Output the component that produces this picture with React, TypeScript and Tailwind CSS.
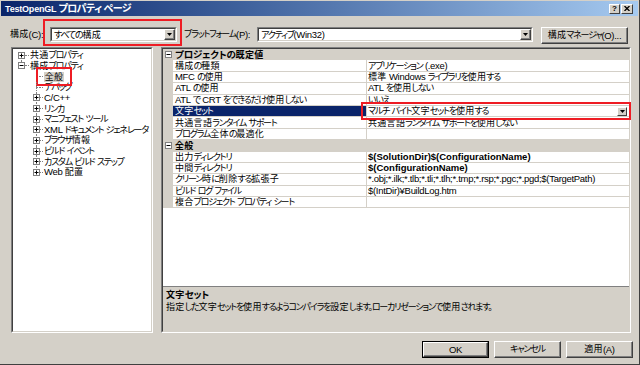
import React from "react";

function Txt({ t, bold }: { t: string; bold?: boolean }) {
  const parts =
    t.match(/[\u0000-\u024f]+|[\u4e00-\u9fff\u3005]+|[^\u0000-\u024f\u4e00-\u9fff\u3005]+/g) || [];
  return (
    <>
      {parts.map((s, i) => {
        const c = s.charCodeAt(0);
        if (c < 0x250)
          return (
            <span key={i} className={bold ? "text-[9.5px] tracking-[0px]" : "text-[9.5px] tracking-[-0.3px]"}>
              {s}
            </span>
          );
        if ((c >= 0x4e00 && c <= 0x9fff) || c === 0x3005)
          return (
            <span key={i} className="text-[9px] tracking-[0.3px]">
              {s}
            </span>
          );
        return (
          <span key={i} className={bold ? "text-[9.5px] tracking-[-0.2px]" : "text-[9px] tracking-[-1.2px]"}>
            {s}
          </span>
        );
      })}
    </>
  );
}

function Expander({ minus }: { minus?: boolean }) {
  return (
    <svg width="7" height="7" viewBox="0 0 7 7" className="block relative shrink-0">
      <rect x="0.5" y="0.5" width="6" height="6" fill="white" stroke="#808080" />
      <path d="M1.5 3.5H5.5" stroke="black" />
      {!minus && <path d="M3.5 1.5V5.5" stroke="black" />}
    </svg>
  );
}

function Arrow() {
  return (
    <svg width="5" height="3" viewBox="0 0 5 3" className="block">
      <path d="M0 0H5L2.5 3Z" fill="black" />
    </svg>
  );
}

function DropBtn() {
  return (
    <div className="w-[11px] h-full shrink-0 bg-[#d4d0c8] border border-t-white border-l-white border-b-[#404040] border-r-[#404040] shadow-[inset_-1px_-1px_0_#808080] flex items-center justify-center">
      <Arrow />
    </div>
  );
}

function Combo({ text, w, red }: { text: string; w: string; red?: boolean }) {
  return (
    <div className={`relative h-[15px] shrink-0 ${w}`}>
      <div className="w-full h-full border border-t-[#808080] border-l-[#808080] border-b-white border-r-white">
        <div className="w-full h-full border border-t-[#404040] border-l-[#404040] border-b-[#d4d0c8] border-r-[#d4d0c8] bg-white flex items-center">
          <span className="flex-1 pl-[2px] leading-none whitespace-nowrap overflow-hidden">
            <Txt t={text} />
          </span>
          <DropBtn />
        </div>
      </div>
      {red && (
        <div className="absolute -left-[7px] -right-[5px] -top-[8px] -bottom-[4px] border-2 border-[#ee1c24]" />
      )}
    </div>
  );
}

function Button({ label, def }: { label: string; def?: boolean }) {
  return (
    <div className={`w-[67px] h-[17px] ${def ? "border border-black" : ""}`}>
      <div className="w-full h-full bg-[#d4d0c8] border border-t-white border-l-white border-b-[#404040] border-r-[#404040] shadow-[inset_-1px_-1px_0_#808080] flex items-center justify-center leading-none whitespace-nowrap">
        <Txt t={label} />
      </div>
    </div>
  );
}

type TreeItem = {
  label: string;
  level: 1 | 2;
  exp?: "plus" | "minus";
  sel?: boolean;
  last?: boolean;
  vline?: "down" | "up";
};

const tree: TreeItem[] = [
  { label: "共通プロパティ", level: 1, exp: "plus", vline: "down" },
  { label: "構成プロパティ", level: 1, exp: "minus", vline: "up" },
  { label: "全般", level: 2, sel: true },
  { label: "デバッグ", level: 2 },
  { label: "C/C++", level: 2, exp: "plus" },
  { label: "リンカ", level: 2, exp: "plus" },
  { label: "マニフェスト ツール", level: 2, exp: "plus" },
  { label: "XML ドキュメント ジェネレータ", level: 2, exp: "plus" },
  { label: "ブラウザ情報", level: 2, exp: "plus" },
  { label: "ビルド イベント", level: 2, exp: "plus" },
  { label: "カスタム ビルド ステップ", level: 2, exp: "plus" },
  { label: "Web 配置", level: 2, exp: "plus", last: true },
];

type Prop = { h?: string; n?: string; v?: string; b?: boolean; sel?: boolean };

const props: Prop[] = [
  { h: "プロジェクトの既定値" },
  { n: "構成の種類", v: "アプリケーション (.exe)" },
  { n: "MFC の使用", v: "標準 Windows ライブラリを使用する" },
  { n: "ATL の使用", v: "ATL を使用しない" },
  { n: "ATL で CRT をできるだけ使用しない", v: "いいえ" },
  { n: "文字セット", v: "マルチ バイト文字セットを使用する", sel: true },
  { n: "共通言語ランタイム サポート", v: "共通言語ランタイム サポートを使用しない" },
  { n: "プログラム全体の最適化", v: "" },
  { h: "全般" },
  { n: "出力ディレクトリ", v: "$(SolutionDir)$(ConfigurationName)", b: true },
  { n: "中間ディレクトリ", v: "$(ConfigurationName)", b: true },
  {
    n: "クリーン時に削除する拡張子",
    v: "*.obj;*.ilk;*.tlb;*.tli;*.tlh;*.tmp;*.rsp;*.pgc;*.pgd;$(TargetPath)",
  },
  { n: "ビルド ログ ファイル", v: "$(IntDir)¥BuildLog.htm" },
  { n: "複合プロジェクト プロパティ シート", v: "" },
];

function TreeRow({ it }: { it: TreeItem }) {
  if (it.level === 1) {
    return (
      <div className="flex items-center h-[10.65px]">
        <div className="w-[5px] shrink-0" />
        <div className="relative w-[7px] h-full shrink-0 flex items-center">
          {it.vline === "down" && (
            <div className="absolute left-[3px] top-1/2 bottom-0 border-l border-dotted border-[#808080]" />
          )}
          {it.vline === "up" && (
            <div className="absolute left-[3px] top-0 h-1/2 border-l border-dotted border-[#808080]" />
          )}
          <Expander minus={it.exp === "minus"} />
        </div>
        <div className="w-[4px] shrink-0 border-t border-dotted border-[#808080]" />
        <span className="ml-[1px] leading-none whitespace-nowrap">
          <Txt t={it.label} />
        </span>
      </div>
    );
  }
  return (
    <div className="flex items-center h-[10.65px]">
      <div className="w-[20px] shrink-0" />
      <div className="relative w-[7px] h-full shrink-0 flex items-center">
        {it.last ? (
          <div className="absolute left-[3px] top-0 h-1/2 border-l border-dotted border-[#808080]" />
        ) : (
          <div className="absolute left-[3px] top-0 bottom-0 border-l border-dotted border-[#808080]" />
        )}
        {it.exp ? (
          <Expander />
        ) : (
          <div className="ml-[3px] w-[4px] border-t border-dotted border-[#808080]" />
        )}
      </div>
      <div className="w-[3px] shrink-0 border-t border-dotted border-[#808080]" />
      {it.sel ? (
        <span className="relative inline-block ml-[1px] w-[20px] shrink-0 bg-[#d4d0c8] leading-[10px] whitespace-nowrap text-center">
          <Txt t="全般" />
          <span className="absolute -left-[8px] -right-[8px] -top-[5px] -bottom-[4px] border-2 border-[#ee1c24]" />
        </span>
      ) : (
        <span className="ml-[1px] leading-none whitespace-nowrap">
          <Txt t={it.label} />
        </span>
      )}
    </div>
  );
}

function PropRow({ p }: { p: Prop }) {
  if (p.h) {
    return (
      <div className="flex items-center h-[11.4px] bg-[#d4d0c8]">
        <div className="w-[10px] shrink-0 flex justify-center">
          <Expander minus />
        </div>
        <span className="pl-[2px] font-bold leading-none whitespace-nowrap">
          <Txt t={p.h} bold />
        </span>
      </div>
    );
  }
  return (
    <div className="flex h-[11.4px]">
      <div className="w-[10px] shrink-0 bg-[#d4d0c8]" />
      <div
        className={`w-[194px] shrink-0 border-b border-r border-[#d4d0c8] flex items-center pl-[2px] overflow-hidden ${
          p.sel ? "bg-[#0a246a] text-white" : "bg-white"
        }`}
      >
        <span className="leading-none whitespace-nowrap">
          <Txt t={p.n || ""} />
        </span>
      </div>
      <div className="relative flex-1 border-b border-[#d4d0c8] bg-white flex items-center pl-[1px]">
        <span className={`flex-1 leading-none whitespace-nowrap ${p.b ? "font-bold" : ""}`}>
          <Txt t={p.v || ""} bold={p.b} />
        </span>
        {p.sel && (
          <>
            <div className="w-[10px] h-[9px] mr-[2px] shrink-0 bg-[#d4d0c8] border border-t-white border-l-white border-b-[#404040] border-r-[#404040] flex items-center justify-center">
              <Arrow />
            </div>
            <div className="absolute z-10 -left-[6px] -right-[2px] -top-[4px] -bottom-[4px] border-2 border-[#ee1c24]" />
          </>
        )}
      </div>
    </div>
  );
}

export default function App() {
  return (
    <div className="w-[640px] h-[365px] bg-[#d4d0c8] flex flex-col border-r border-b border-r-[#404040] border-b-[#404040] text-black text-[10px] font-['Liberation_Sans','Noto_Sans_CJK_JP',sans-serif] [font-feature-settings:'palt'] overflow-hidden">
      {/* title bar */}
      <div className="mt-[1px] mx-[1px] h-[15px] bg-linear-to-r from-[#0a246a] to-[#a6caf0] flex items-center justify-between pl-[4px] pr-[5px]">
        <span className="text-white font-bold leading-none whitespace-nowrap">
          <span className="text-[9px] tracking-[-0.2px]">TestOpenGL </span>
          <span className="text-[10px] tracking-[-0.6px]">プロパティ ページ</span>
        </span>
        <div className="flex gap-[1px]">
          <div className="w-[11px] h-[10px] bg-[#d4d0c8] border border-t-white border-l-white border-b-[#404040] border-r-[#404040] flex items-center justify-center text-[8px] font-bold leading-none">
            ?
          </div>
          <div className="w-[12px] h-[10px] bg-[#d4d0c8] border border-t-white border-l-white border-b-[#404040] border-r-[#404040] flex items-center justify-center">
            <svg width="6" height="5" viewBox="0 0 6 5" className="block">
              <path d="M0.5 0L5.5 5M5.5 0L0.5 5" stroke="black" strokeWidth="1.3" />
            </svg>
          </div>
        </div>
      </div>

      {/* toolbar */}
      <div className="mt-[11px] h-[17px] flex items-start pl-[10px]">
        <div className="w-[40px] shrink-0 h-[15px] flex items-center leading-none whitespace-nowrap">
          <Txt t="構成(C):" />
        </div>
        <Combo text="すべての構成" w="w-[127px]" red />
        <div className="ml-[7px] w-[73px] shrink-0 h-[15px] flex items-center leading-none whitespace-nowrap">
          <Txt t="プラットフォーム(P):" />
        </div>
        <Combo text="アクティブ(Win32)" w="w-[276px]" />
        <div className="ml-[8px] w-[87px] shrink-0 h-[17px] bg-[#d4d0c8] border border-t-white border-l-white border-b-[#404040] border-r-[#404040] shadow-[inset_-1px_-1px_0_#808080] flex items-center justify-center leading-none whitespace-nowrap">
          <Txt t="構成マネージャ(O)..." />
        </div>
      </div>

      {/* main */}
      <div className="mt-[3px] h-[286px] flex pl-[11px]">
        {/* tree */}
        <div className="w-[142px] shrink-0 h-full border border-t-[#808080] border-l-[#808080] border-b-white border-r-white">
          <div className="w-full h-full border border-t-[#404040] border-l-[#404040] border-b-[#d4d0c8] border-r-[#d4d0c8] bg-white pt-[1px] overflow-hidden">
            {tree.map((it, i) => (
              <TreeRow key={i} it={it} />
            ))}
          </div>
        </div>

        {/* property grid */}
        <div className="ml-[8px] w-[470px] shrink-0 h-full border border-t-[#808080] border-l-[#808080] border-b-white border-r-white">
          <div className="w-full h-full border border-t-[#404040] border-l-[#404040] border-b-[#d4d0c8] border-r-[#d4d0c8] flex flex-col">
            <div className="flex-1 bg-white flex flex-col">
              {props.map((p, i) => (
                <PropRow key={i} p={p} />
              ))}
            </div>
            <div className="h-[45px] border-t border-[#808080] bg-[#d4d0c8] pl-[3px] pt-[3px] flex flex-col gap-[1px]">
              <div className="font-bold leading-[10px]">
                <Txt t="文字セット" bold />
              </div>
              <div className="leading-[11px] whitespace-nowrap">
                <Txt t="指定した文字セットを使用するようコンパイラを設定します。ローカリゼーションで使用されます。" />
              </div>
            </div>
          </div>
        </div>
      </div>

      {/* buttons */}
      <div className="mt-[8px] h-[17px] flex justify-end gap-[5px] pr-[6px]">
        <Button label="OK" def />
        <Button label="キャンセル" />
        <Button label="適用(A)" />
      </div>
    </div>
  );
}
